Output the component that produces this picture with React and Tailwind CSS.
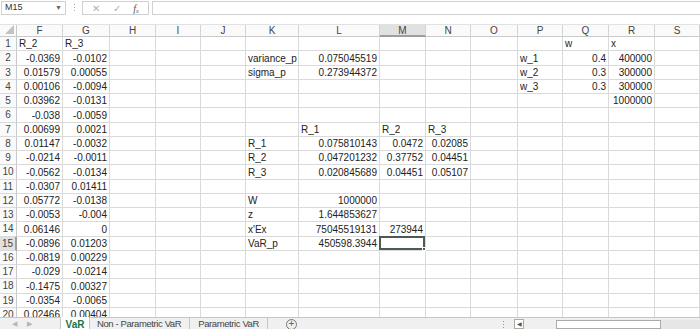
import React from "react";

const COLS = [
  ["F", "w-[46px]"],
  ["G", "w-[47px]"],
  ["H", "w-[46px]"],
  ["I", "w-[45px]"],
  ["J", "w-[45px]"],
  ["K", "w-[53px]"],
  ["L", "w-[81px]"],
  ["M", "w-[46px]"],
  ["N", "w-[45px]"],
  ["O", "w-[47px]"],
  ["P", "w-[45px]"],
  ["Q", "w-[46px]"],
  ["R", "w-[46px]"],
  ["S", "w-[45px]"],
];

const F = ["R_2", -0.0369, 0.01579, 0.00106, 0.03962, -0.038, 0.00699, 0.01147, -0.0214, -0.0562, -0.0307, 0.05772, -0.0053, 0.06146, -0.0896, -0.0819, -0.029, -0.1475, -0.0354, 0.02466];
const G = ["R_3", -0.0102, "0.00055", -0.0094, -0.0131, -0.0059, 0.0021, -0.0032, -0.0011, -0.0134, 0.01411, -0.0138, -0.004, 0, 0.01203, 0.00229, -0.0214, 0.00327, -0.0065, 0.00404];

const cells = {
  Q1: "w", R1: "x",
  K2: "variance_p", L2: "0.075045519", P2: "w_1", Q2: 0.4, R2: 400000,
  K3: "sigma_p", L3: "0.273944372", P3: "w_2", Q3: 0.3, R3: 300000,
  P4: "w_3", Q4: 0.3, R4: 300000,
  R5: 1000000,
  L7: "R_1", M7: "R_2", N7: "R_3",
  K8: "R_1", L8: "0.075810143", M8: 0.0472, N8: 0.02085,
  K9: "R_2", L9: "0.047201232", M9: 0.37752, N9: 0.04451,
  K10: "R_3", L10: "0.020845689", M10: 0.04451, N10: 0.05107,
  K12: "W", L12: 1000000,
  K13: "z", L13: "1.644853627",
  K14: "x'Ex", L14: "75045519131", M14: 273944,
  K15: "VaR_p", L15: "450598.3944",
};
F.forEach((v, i) => (cells["F" + (i + 1)] = v));
G.forEach((v, i) => (cells["G" + (i + 1)] = v));

const isNum = (v) => typeof v === "number" || /^-?[\d.]+$/.test(v);

const Row = ({ r }) => {
  const selRow = r === 15;
  return (
    <div className="flex h-[14.25px] shrink-0">
      <div
        className={`w-[17px] shrink-0 flex items-center justify-center border-b border-[#dadada] text-[10px] text-[#444] ${
          selRow ? "bg-[#e1e1e1] border-r-2 border-r-[#9d9d9d]" : "bg-[#fafafa] border-r border-r-[#c9c9c9]"
        }`}
      >
        {r}
      </div>
      {COLS.map(([c, w]) => {
        const v = cells[c + r];
        const sel = c === "M" && r === 15;
        return (
          <div
            key={c}
            className={`${w} shrink-0 relative flex items-end px-[2px] border-r border-b border-[#dadada] text-[10px] leading-[12px] text-[#222] whitespace-nowrap ${
              v !== undefined && isNum(v) ? "justify-end" : "justify-start"
            }`}
          >
            {v !== undefined ? String(v) : ""}
            {sel && (
              <div className="absolute -left-[1px] -top-[1px] right-0 bottom-0 border-2 border-[#4d5a53]">
                <div className="absolute -right-[3px] -bottom-[3px] w-[4px] h-[4px] bg-[#4d5a53] border border-white" />
              </div>
            )}
          </div>
        );
      })}
    </div>
  );
};

const Dots = ({ color }) => (
  <div className="h-[12px] flex flex-col items-center justify-center gap-[2px]">
    <span className={`w-[1px] h-[1px] ${color}`} />
    <span className={`w-[1px] h-[1px] ${color}`} />
    <span className={`w-[1px] h-[1px] ${color}`} />
  </div>
);

const App = () => {
  const rows = Array.from({ length: 20 }, (_, i) => i + 1);
  return (
    <div className="w-[700px] h-[329px] overflow-hidden bg-white flex flex-col font-['Liberation_Sans',Arial,sans-serif]">
      {/* formula bar */}
      <div className="h-[24px] shrink-0 flex items-start pt-[1px] pl-[1px]">
        <div className="w-[65px] h-[14px] border border-[#d0d0d0] flex items-center justify-between px-[3px] text-[9px] text-[#333]">
          <span>M15</span>
          <span className="text-[7px] text-[#666]">▼</span>
        </div>
        <div className="w-[16px] flex justify-center">
          <Dots color="bg-[#aaa]" />
        </div>
        <div className="w-[67px] h-[14px] border border-[#d0d0d0] flex items-center justify-around px-[3px] text-[10px]">
          <span className="text-[#b0b0b0]">✕</span>
          <span className="text-[#b0b0b0]">✓</span>
          <span className="italic font-['Liberation_Serif',serif] text-[#555] text-[10px]">
            f<sub className="text-[6px]">x</sub>
          </span>
        </div>
        <div className="ml-[3px] flex-1 h-[14px] border border-[#d0d0d0] border-r-0" />
      </div>

      {/* column headers */}
      <div className="h-[13px] shrink-0 flex border-t border-[#e2e2e2]">
        <div className="w-[17px] shrink-0 relative bg-[#fafafa] border-r border-b border-[#c9c9c9]">
          <div className="absolute right-[2px] bottom-[2px] w-0 h-0 border-l-[9px] border-l-transparent border-b-[9px] border-b-[#c2c2c2]" />
        </div>
        {COLS.map(([c, w]) => (
          <div
            key={c}
            className={`${w} shrink-0 flex items-center justify-center text-[10px] text-[#444] border-r border-[#d4d4d4] ${
              c === "M" ? "bg-[#e1e1e1] border-b-2 border-b-[#9d9d9d]" : "bg-[#fafafa] border-b border-b-[#c9c9c9]"
            }`}
          >
            {c}
          </div>
        ))}
      </div>

      {/* grid */}
      <div className="h-[280px] shrink-0 overflow-hidden flex flex-col">
        {rows.map((r) => (
          <Row key={r} r={r} />
        ))}
      </div>

      {/* sheet tabs */}
      <div className="h-[20px] shrink-0 flex items-start bg-[#f0f0f0] border-t border-[#c6c6c6] text-[9.5px] tracking-[-0.4px] text-[#444]">
        <div className="w-[500px] shrink-0 flex items-start">
          <div className="w-[60px] flex items-center h-[12px] text-[7px] text-[#b5b5b5]">
            <span className="ml-[12px]">◀</span>
            <span className="ml-[10px]">▶</span>
          </div>
          <div className="w-[30px] h-[14px] -mt-[1px] bg-white flex items-center justify-center font-bold text-[10px] tracking-normal text-[#217346] border-x border-[#c6c6c6]">
            VaR
          </div>
          <div className="h-[12px] flex items-center pl-[7px] pr-[8px] border-r border-[#c6c6c6]">Non - Parametric VaR</div>
          <div className="h-[12px] flex items-center px-[8px] border-r border-[#c6c6c6]">Parametric VaR</div>
          <div className="ml-[18px] h-[12px] flex items-center">
            <span className="w-[11px] h-[11px] rounded-full border border-[#777] flex items-center justify-center text-[10px] leading-none tracking-normal text-[#666]">+</span>
          </div>
        </div>
        <div className="flex-1 flex items-start">
          <div className="w-[6px] flex justify-center">
            <Dots color="bg-[#999]" />
          </div>
          <div className="ml-[8px] w-[10px] h-[10px] mt-[1px] border border-[#aaa] bg-white flex items-center justify-center text-[6px] text-[#555]">◀</div>
          <div className="ml-[32px] w-[105px] h-[9px] mt-[2px] border border-[#aaa] bg-white" />
          <div className="flex-1 h-[9px] mt-[2px] bg-[#e6e6e6]" />
        </div>
      </div>
    </div>
  );
};

export default App;
